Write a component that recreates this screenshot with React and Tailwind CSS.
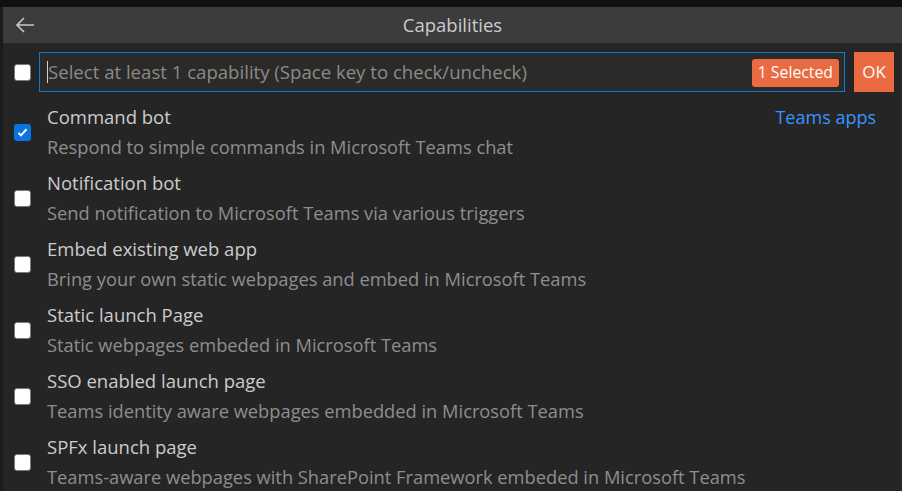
import { useState } from "react";

const items = [
  { title: "Command bot", desc: "Respond to simple commands in Microsoft Teams chat", link: "Teams apps" },
  { title: "Notification bot", desc: "Send notification to Microsoft Teams via various triggers" },
  { title: "Embed existing web app", desc: "Bring your own static webpages and embed in Microsoft Teams" },
  { title: "Static launch Page", desc: "Static webpages embeded in Microsoft Teams" },
  { title: "SSO enabled launch page", desc: "Teams identity aware webpages embedded in Microsoft Teams" },
  { title: "SPFx launch page", desc: "Teams-aware webpages with SharePoint Framework embeded in Microsoft Teams" },
];

function Box({ checked }) {
  if (checked) {
    return (
      <div className="w-[17px] h-[17px] rounded-[3px] bg-[#0a74e0] flex items-center justify-center">
        <svg width="13" height="13" viewBox="0 0 16 16">
          <path d="M3 8.5l3 3 7-7.5" fill="none" stroke="#fff" strokeWidth="2.4" />
        </svg>
      </div>
    );
  }
  return <div className="w-[17px] h-[17px] rounded-[3px] bg-white border border-[#7a7a7a]" />;
}

export default function App() {
  const [checked] = useState([true, false, false, false, false, false]);

  return (
    <div className="w-[902px] h-[491px] bg-[#111] pt-[7px] overflow-hidden" style={{ fontFamily: '"Open Sans", sans-serif' }}>
      <div className="flex h-full">
        <div className="w-[3px] bg-[#1b1b1b] shrink-0" />
        <div className="flex-1 bg-[#252526] flex flex-col">
          <div className="h-[36px] shrink-0 bg-[#3c3c3c] flex items-center relative">
            <svg className="absolute left-[11px]" width="22" height="22" viewBox="0 0 22 22">
              <path d="M20 11H3M10 4l-7 7 7 7" fill="none" stroke="#c8c8c8" strokeWidth="1.6" />
            </svg>
            <div className="flex-1 text-center text-[18.5px] text-[#cccccc]">Capabilities</div>
          </div>

          <div className="flex items-center shrink-0 mt-[9px] h-[40px]">
            <div className="w-[36px] flex justify-center pl-[3px] shrink-0">
              <Box checked={false} />
            </div>
            <div className="w-[806px] h-[40px] border border-[#0a7ad6] bg-[#2b2a28] flex items-center pl-[7px] pr-[5px]">
              <div className="w-px h-[22px] bg-[#d0d0d0]" />
              <span className="flex-1 text-[18.6px] text-[#8a8a8a] whitespace-nowrap">Select at least 1 capability (Space key to check/uncheck)</span>
              <span className="h-[28px] mt-[2px] px-[6px] rounded-[3px] bg-[#ea6b42] text-white text-[15.8px] flex items-center">1 Selected</span>
            </div>
            <div className="ml-[9px] w-[40px] h-[40px] bg-[#ea6b42] text-[#fafafa] text-[17px] flex items-center justify-center">OK</div>
          </div>

          <div className="mt-[7px] shrink-0">
            {items.map((it, i) => (
              <div key={i} className="flex items-center h-[66px]">
                <div className="w-[36px] flex justify-center pl-[3px] shrink-0">
                  <Box checked={checked[i]} />
                </div>
                <div className="flex-1 pl-[8px]">
                  <div className="h-[30px] flex items-center text-[18.5px] text-[#cccccc]">
                    <span className="flex-1">{it.title}</span>
                    {it.link && <span className="text-[#3794ff] text-[18px] mr-[26px]">{it.link}</span>}
                  </div>
                  <div className="h-[30px] flex items-center text-[18.3px] text-[#8e8e8e] whitespace-nowrap">{it.desc}</div>
                </div>
              </div>
            ))}
          </div>
        </div>
      </div>
    </div>
  );
}
